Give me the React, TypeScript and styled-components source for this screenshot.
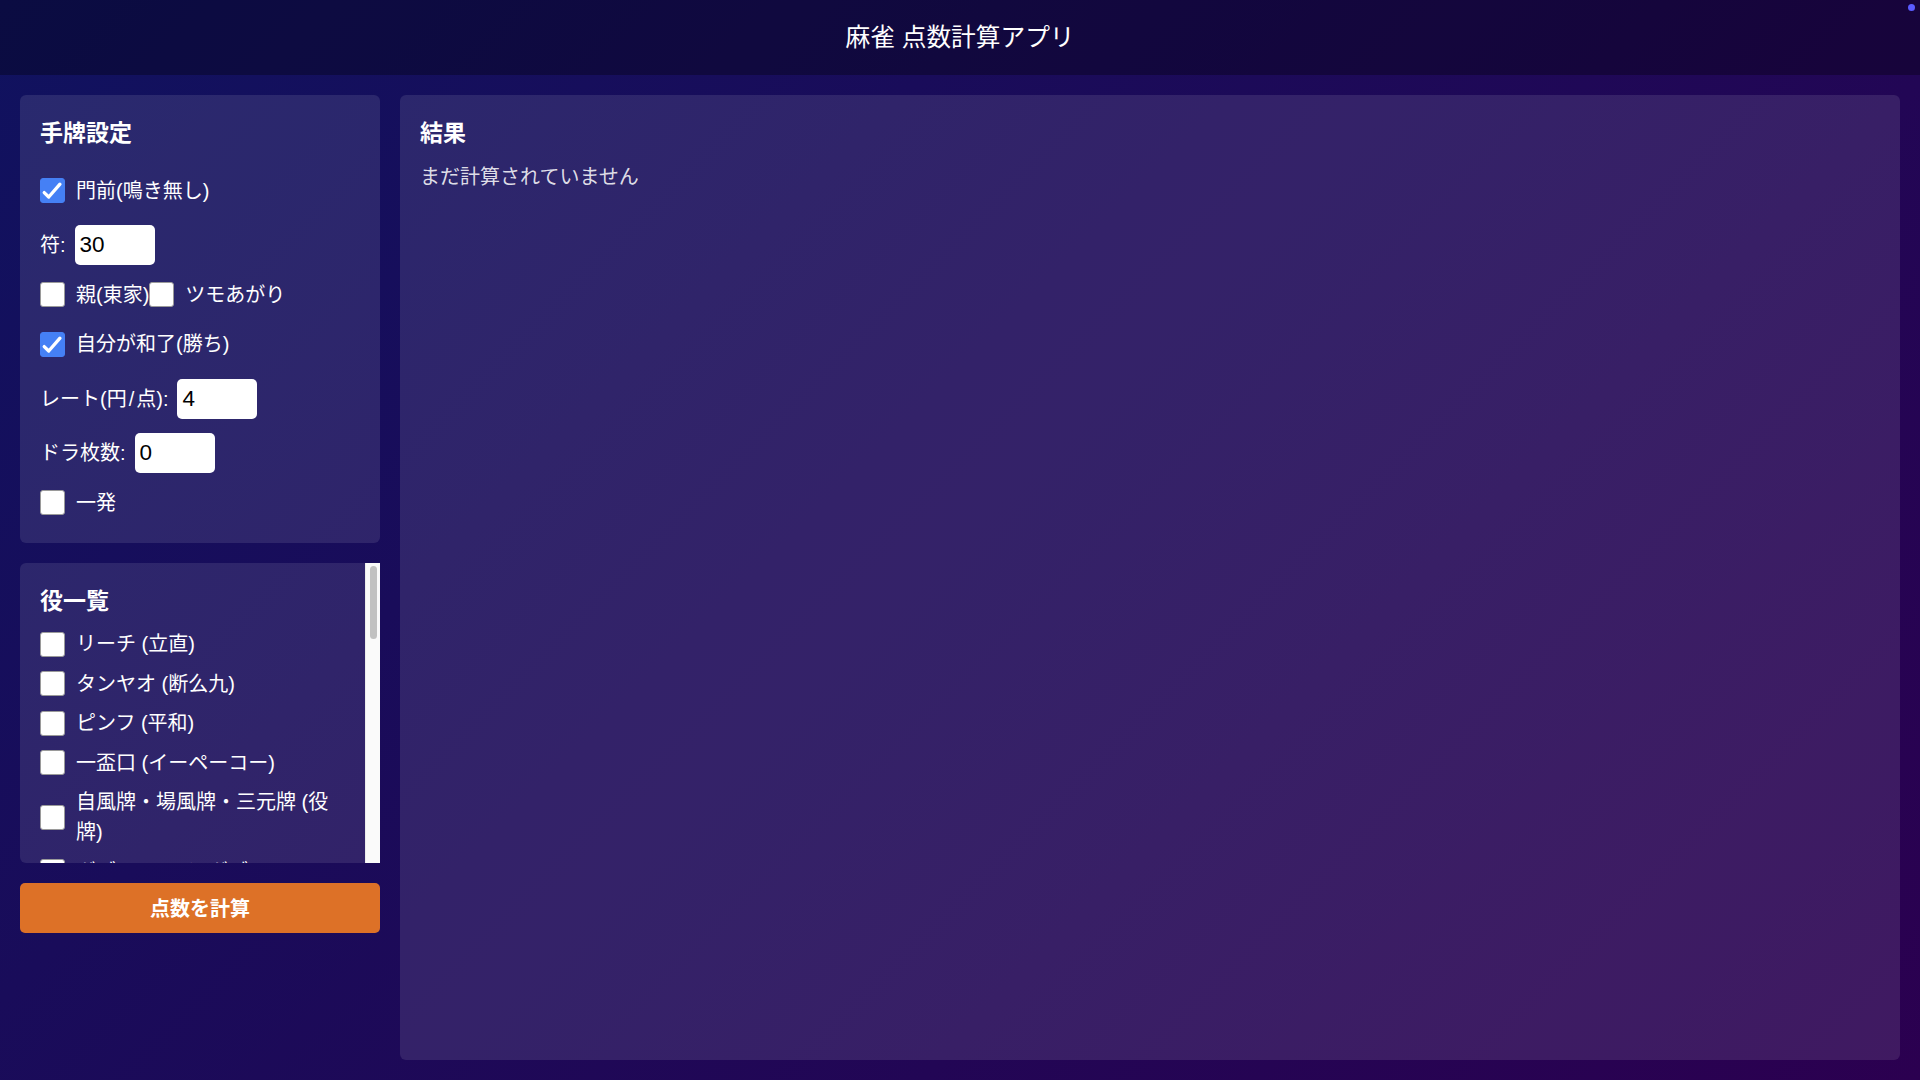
import React, { useEffect, useRef, useState } from "react";
import styled, { createGlobalStyle } from "styled-components";

const GlobalStyle = createGlobalStyle`
  html, body {
    margin: 0;
    padding: 0;
  }
  body {
    min-height: 100vh;
    background: linear-gradient(135deg, #10125f 0%, #2b0050 100%);
    font-family: "Liberation Sans", "Noto Sans CJK JP", sans-serif;
    color: #ffffff;
  }
  * { box-sizing: border-box; }
`;

const Page = styled.div`
  display: flex;
  flex-direction: column;
  height: 100vh;
  position: relative;
`;

const Header = styled.header`
  height: 75px;
  flex: 0 0 75px;
  display: flex;
  align-items: center;
  justify-content: center;
  background: rgba(0, 0, 0, 0.3);
`;

const Title = styled.h1`
  margin: 0;
  font-size: 24.7px;
  font-weight: 400;
  line-height: 30px;
  color: #ffffff;
`;

const StatusDot = styled.span`
  position: absolute;
  top: 4px;
  right: 5px;
  width: 7px;
  height: 7px;
  border-radius: 50%;
  background: #5b5cff;
`;

const Main = styled.main`
  flex: 1;
  display: flex;
  gap: 20px;
  padding: 20px;
  min-height: 0;
`;

const Sidebar = styled.div`
  width: 360px;
  flex: 0 0 360px;
  display: flex;
  flex-direction: column;
  gap: 20px;
  align-self: flex-start;
`;

const Panel = styled.section`
  background: rgba(255, 255, 255, 0.1);
  border-radius: 6px;
  padding: 20px;
`;

const ScrollPanel = styled.section`
  display: flex;
  height: 300px;
  background: rgba(255, 255, 255, 0.1);
  border-radius: 6px 0 0 6px;
  overflow: hidden;
`;

const ScrollArea = styled.div`
  flex: 1;
  min-width: 0;
  overflow-y: auto;
  padding: 20px;
  scrollbar-width: none;
  &::-webkit-scrollbar {
    display: none;
  }
`;

const ScrollTrack = styled.div`
  position: relative;
  flex: 0 0 15px;
  width: 15px;
  background: #fafafa;
  border-left: 1px solid #ececec;
`;

const ScrollThumb = styled.div`
  position: absolute;
  left: 3.5px;
  width: 7.5px;
  border-radius: 4px;
  background: #c1c1c1;
`;

const ResultPanel = styled(Panel)`
  flex: 1;
`;

const Heading = styled.h2`
  margin: 4px 0 14.5px;
  font-size: 23px;
  line-height: 28px;
  font-weight: 700;
  color: #ffffff;
`;

const SettingsForm = styled.div`
  display: flex;
  flex-direction: column;
  gap: 14.5px;
  padding-top: 14px;
`;

const Row = styled.div<{ $kind?: "check" | "input" }>`
  display: flex;
  align-items: center;
  height: ${(p) => (p.$kind === "input" ? "40px" : "30px")};
  margin-bottom: ${(p) => (p.$kind === "input" ? "0" : "5px")};
  font-size: 20px;
  line-height: 30px;
  color: #ffffff;
`;

const CheckLabel = styled.label`
  display: inline-flex;
  align-items: center;
  cursor: pointer;
`;

const Box = styled.span<{ $checked: boolean }>`
  flex: 0 0 25px;
  width: 25px;
  height: 25px;
  margin-right: 11px;
  border-radius: 3px;
  display: inline-flex;
  align-items: center;
  justify-content: center;
  background: ${(p) => (p.$checked ? "#4580f5" : "#ffffff")};
  border: 1px solid ${(p) => (p.$checked ? "#4580f5" : "#9a9a9a")};
`;

const FieldLabel = styled.label`
  display: inline-flex;
  align-items: center;
  gap: 9px;
`;

const Slash = styled.span`
  padding: 0 2px;
`;

const NumberInput = styled.input`
  width: 80px;
  height: 40px;
  border: none;
  border-radius: 5px;
  background: #ffffff;
  padding: 0 5px;
  font-family: "Liberation Sans", Arial, sans-serif;
  font-size: 22.5px;
  color: #000000;
  outline: none;
`;

const YakuList = styled.div`
  display: flex;
  flex-direction: column;
  gap: 9.5px;
`;

const YakuItem = styled.label`
  display: flex;
  align-items: center;
  font-size: 20px;
  line-height: 30px;
  color: #ffffff;
  cursor: pointer;
`;

const YakuText = styled.span`
  flex: 1;
`;

const CalcButton = styled.button`
  height: 50px;
  width: 100%;
  border: none;
  border-radius: 5px;
  background: #dd7127;
  color: #ffffff;
  font-family: "Liberation Sans", "Noto Sans CJK JP", sans-serif;
  font-size: 20px;
  font-weight: 700;
  cursor: pointer;
`;

const ResultText = styled.p`
  margin: 0;
  font-size: 20px;
  line-height: 30px;
  color: rgba(255, 255, 255, 0.85);
`;

const Check = ({ checked }: { checked: boolean }) => (
  <Box $checked={checked}>
    {checked && (
      <svg width="25" height="25" viewBox="0 0 25 25">
        <path
          d="M3.5 14.8 L8.4 19.6 L20.6 5.6"
          fill="none"
          stroke="#ffffff"
          strokeWidth="3.6"
          strokeLinecap="round"
          strokeLinejoin="round"
        />
      </svg>
    )}
  </Box>
);

const CheckOption = ({
  label,
  checked,
  onToggle,
}: {
  label: string;
  checked: boolean;
  onToggle: () => void;
}) => (
  <CheckLabel onClick={onToggle}>
    <Check checked={checked} />
    {label}
  </CheckLabel>
);

const yakuNames = [
  "リーチ (立直)",
  "タンヤオ (断么九)",
  "ピンフ (平和)",
  "一盃口 (イーペーコー)",
  "自風牌・場風牌・三元牌 (役牌)",
  "ダブルリーチ (ダブリー)",
  "三色同順 (サンショク)",
  "一気通貫 (イッツー)",
  "チャンタ (混全帯么九)",
  "七対子 (チートイツ)",
  "対々和 (トイトイ)",
  "三暗刻 (サンアンコー)",
  "三色同刻 (サンショクドーコー)",
  "三槓子 (サンカンツ)",
  "小三元 (ショウサンゲン)",
  "混老頭 (ホンロートー)",
  "二盃口 (リャンペーコー)",
  "純チャン (純全帯么九)",
  "混一色 (ホンイツ)",
  "清一色 (チンイツ)",
  "海底摸月 (ハイテイ)",
  "河底撈魚 (ホウテイ)",
  "嶺上開花 (リンシャン)",
  "槍槓 (チャンカン)",
  "国士無双 (コクシムソウ)",
  "四暗刻 (スーアンコー)",
  "大三元 (ダイサンゲン)",
];

const TRACK_PAD = 3;

const YakuPanel = ({
  checked,
  onToggle,
}: {
  checked: boolean[];
  onToggle: (i: number) => void;
}) => {
  const areaRef = useRef<HTMLDivElement>(null);
  const [thumb, setThumb] = useState({ top: TRACK_PAD, height: 72 });

  const update = () => {
    const el = areaRef.current;
    if (!el) return;
    const track = el.clientHeight - TRACK_PAD * 2;
    const height = Math.max(30, (el.clientHeight / el.scrollHeight) * track);
    const max = el.scrollHeight - el.clientHeight;
    const ratio = max > 0 ? el.scrollTop / max : 0;
    setThumb({ top: TRACK_PAD + ratio * (track - height), height });
  };

  useEffect(() => {
    update();
  }, []);

  return (
    <ScrollPanel>
      <ScrollArea ref={areaRef} onScroll={update}>
        <Heading>役一覧</Heading>
        <YakuList>
          {yakuNames.map((name, i) => (
            <YakuItem key={name} onClick={() => onToggle(i)}>
              <Check checked={checked[i]} />
              <YakuText>{name}</YakuText>
            </YakuItem>
          ))}
        </YakuList>
      </ScrollArea>
      <ScrollTrack>
        <ScrollThumb style={{ top: thumb.top, height: thumb.height }} />
      </ScrollTrack>
    </ScrollPanel>
  );
};

export default function App() {
  const [menzen, setMenzen] = useState(true);
  const [oya, setOya] = useState(false);
  const [tsumo, setTsumo] = useState(false);
  const [win, setWin] = useState(true);
  const [ippatsu, setIppatsu] = useState(false);
  const [fu, setFu] = useState("30");
  const [rate, setRate] = useState("4");
  const [dora, setDora] = useState("0");
  const [yaku, setYaku] = useState<boolean[]>(yakuNames.map(() => false));

  return (
    <>
      <GlobalStyle />
      <Page>
        <Header>
          <Title>麻雀 点数計算アプリ</Title>
        </Header>
        <StatusDot />
        <Main>
          <Sidebar>
            <Panel>
              <Heading>手牌設定</Heading>
              <SettingsForm>
                <Row>
                  <CheckOption label="門前(鳴き無し)" checked={menzen} onToggle={() => setMenzen(!menzen)} />
                </Row>
                <Row $kind="input">
                  <FieldLabel>
                    符:
                    <NumberInput value={fu} onChange={(e) => setFu(e.target.value)} />
                  </FieldLabel>
                </Row>
                <Row>
                  <CheckOption label="親(東家)" checked={oya} onToggle={() => setOya(!oya)} />
                  <CheckOption label="ツモあがり" checked={tsumo} onToggle={() => setTsumo(!tsumo)} />
                </Row>
                <Row>
                  <CheckOption label="自分が和了(勝ち)" checked={win} onToggle={() => setWin(!win)} />
                </Row>
                <Row $kind="input">
                  <FieldLabel>
                    <span>
                      レート(円<Slash>/</Slash>点):
                    </span>
                    <NumberInput value={rate} onChange={(e) => setRate(e.target.value)} />
                  </FieldLabel>
                </Row>
                <Row $kind="input">
                  <FieldLabel>
                    ドラ枚数:
                    <NumberInput value={dora} onChange={(e) => setDora(e.target.value)} />
                  </FieldLabel>
                </Row>
                <Row>
                  <CheckOption label="一発" checked={ippatsu} onToggle={() => setIppatsu(!ippatsu)} />
                </Row>
              </SettingsForm>
            </Panel>

            <YakuPanel
              checked={yaku}
              onToggle={(i) => setYaku(yaku.map((v, j) => (j === i ? !v : v)))}
            />

            <CalcButton>点数を計算</CalcButton>
          </Sidebar>

          <ResultPanel>
            <Heading>結果</Heading>
            <ResultText>まだ計算されていません</ResultText>
          </ResultPanel>
        </Main>
      </Page>
    </>
  );
}
